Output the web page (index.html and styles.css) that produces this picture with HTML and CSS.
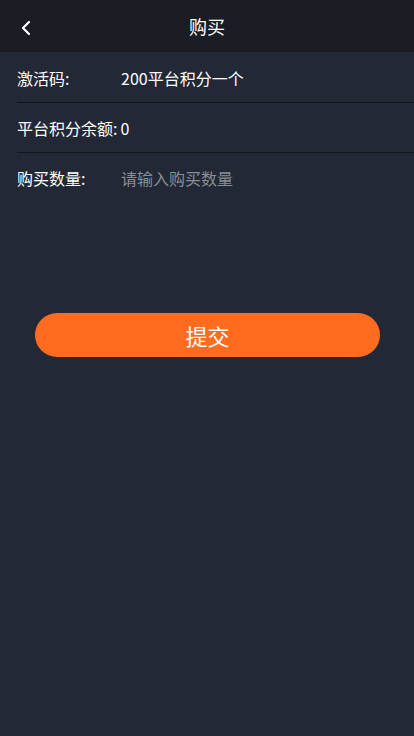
FILE: index.html
```html
<!DOCTYPE html>
<html lang="zh">
<head>
<meta charset="utf-8">
<link rel="stylesheet" href="styles.css">
</head>
<body>
<header class="topbar">
  <span class="back"><svg width="12" height="16" viewBox="0 0 12 16"><path d="M9 2 L3 8 L9 14" fill="none" stroke="#fff" stroke-width="2.2" stroke-linecap="round" stroke-linejoin="round"/></svg></span>
  <h1 class="title">购买</h1>
</header>
<main class="form">
  <div class="row"><span class="label">激活码:</span><span class="value">200平台积分一个</span></div>
  <div class="row"><span class="label-auto">平台积分余额:</span><span class="value-tight">0</span></div>
  <div class="row no-line"><span class="label">购买数量:</span><span class="placeholder">请输入购买数量</span></div>
  <div class="actions"><button class="submit">提交</button></div>
</main>
</body>
</html>
```
FILE: styles.css
```css
html, body {
  margin: 0;
  padding: 0;
  background: #222835;
  font-family: "Noto Sans CJK SC", "Liberation Sans", sans-serif;
  color: #fff;
  height: 736px;
}
.topbar {
  height: 52px;
  background: #1b1d25;
  display: flex;
  align-items: center;
  justify-content: center;
  position: relative;
}
.back {
  position: absolute;
  left: 20px;
  top: 20px;
  display: flex;
}
.title {
  margin: 0;
  font-size: 18px;
  font-weight: normal;
  line-height: 1;
}
.form {
  padding-left: 17px;
  padding-top: 1px;
}
.row {
  height: 49px;
  border-bottom: 1px solid #12151c;
  display: flex;
  align-items: center;
  font-size: 16px;
}
.row.no-line { border-bottom: none; }
.label { width: 104px; }
.label-auto { padding-right: 3px; }
.placeholder { color: #8a8d94; }
.actions {
  padding: 111px 34px 0 18px;
}
.submit {
  width: 100%;
  height: 44px;
  border: none;
  border-radius: 22px;
  background: #ff6c1f;
  color: #fff;
  font-family: "Noto Sans CJK SC", sans-serif;
  font-size: 22px;
  padding: 0;
}
```
